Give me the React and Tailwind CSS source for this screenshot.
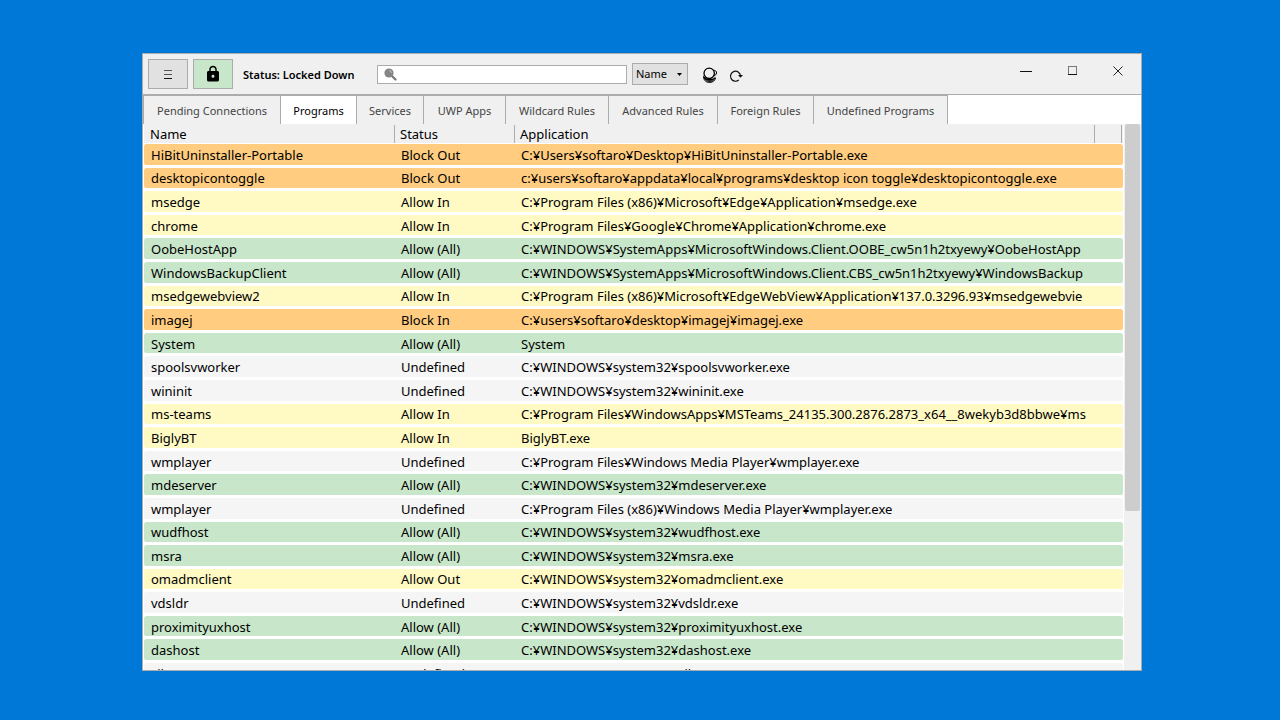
import React from "react";

const tabs = [
  { label: "Pending Connections", width: "w-[138px]" },
  { label: "Programs", width: "w-[76px]", active: true },
  { label: "Services", width: "w-[67px]" },
  { label: "UWP Apps", width: "w-[82px]" },
  { label: "Wildcard Rules", width: "w-[103px]" },
  { label: "Advanced Rules", width: "w-[109px]" },
  { label: "Foreign Rules", width: "w-[96px]" },
  { label: "Undefined Programs", width: "w-[134px]" },
];

const programs = [
  ["HiBitUninstaller-Portable", "Block Out", "C:¥Users¥softaro¥Desktop¥HiBitUninstaller-Portable.exe"],
  ["desktopicontoggle", "Block Out", "c:¥users¥softaro¥appdata¥local¥programs¥desktop icon toggle¥desktopicontoggle.exe"],
  ["msedge", "Allow In", "C:¥Program Files (x86)¥Microsoft¥Edge¥Application¥msedge.exe"],
  ["chrome", "Allow In", "C:¥Program Files¥Google¥Chrome¥Application¥chrome.exe"],
  ["OobeHostApp", "Allow (All)", "C:¥WINDOWS¥SystemApps¥MicrosoftWindows.Client.OOBE_cw5n1h2txyewy¥OobeHostApp"],
  ["WindowsBackupClient", "Allow (All)", "C:¥WINDOWS¥SystemApps¥MicrosoftWindows.Client.CBS_cw5n1h2txyewy¥WindowsBackup"],
  ["msedgewebview2", "Allow In", "C:¥Program Files (x86)¥Microsoft¥EdgeWebView¥Application¥137.0.3296.93¥msedgewebvie"],
  ["imagej", "Block In", "C:¥users¥softaro¥desktop¥imagej¥imagej.exe"],
  ["System", "Allow (All)", "System"],
  ["spoolsvworker", "Undefined", "C:¥WINDOWS¥system32¥spoolsvworker.exe"],
  ["wininit", "Undefined", "C:¥WINDOWS¥system32¥wininit.exe"],
  ["ms-teams", "Allow In", "C:¥Program Files¥WindowsApps¥MSTeams_24135.300.2876.2873_x64__8wekyb3d8bbwe¥ms"],
  ["BiglyBT", "Allow In", "BiglyBT.exe"],
  ["wmplayer", "Undefined", "C:¥Program Files¥Windows Media Player¥wmplayer.exe"],
  ["mdeserver", "Allow (All)", "C:¥WINDOWS¥system32¥mdeserver.exe"],
  ["wmplayer", "Undefined", "C:¥Program Files (x86)¥Windows Media Player¥wmplayer.exe"],
  ["wudfhost", "Allow (All)", "C:¥WINDOWS¥system32¥wudfhost.exe"],
  ["msra", "Allow (All)", "C:¥WINDOWS¥system32¥msra.exe"],
  ["omadmclient", "Allow Out", "C:¥WINDOWS¥system32¥omadmclient.exe"],
  ["vdsldr", "Undefined", "C:¥WINDOWS¥system32¥vdsldr.exe"],
  ["proximityuxhost", "Allow (All)", "C:¥WINDOWS¥system32¥proximityuxhost.exe"],
  ["dashost", "Allow (All)", "C:¥WINDOWS¥system32¥dashost.exe"],
  ["sihost", "Undefined", "C:¥WINDOWS¥system32¥sihost.exe"],
];

const rowColor = {
  "Block Out": "bg-[#ffcc80]",
  "Block In": "bg-[#ffcc80]",
  "Allow In": "bg-[#fff9c4]",
  "Allow Out": "bg-[#fff9c4]",
  "Allow (All)": "bg-[#c8e6c9]",
  Undefined: "bg-[#f5f5f5]",
};

function Toolbar() {
  return (
    <header className="flex h-10 shrink-0 items-center bg-[#f0f0f0] pl-[5px]">
      <button aria-label="Menu" className="flex h-[30px] w-10 items-center justify-center border border-[#acacac] bg-[#e1e1e1]">
        <svg width="10" height="10" viewBox="0 0 10 10" shapeRendering="crispEdges">
          <path d="M1 1.5h8M1 5.5h8" stroke="#555" />
          <path d="M1 9.5h8" stroke="#111" />
        </svg>
      </button>
      <button aria-label="Toggle lock" className="ml-[5px] flex h-[30px] w-10 items-center justify-center border border-[#acacac] bg-[#c8e6c9]">
        <svg width="18" height="18" viewBox="0 0 24 24">
          <path d="M18 8h-1V6c0-2.76-2.24-5-5-5S7 3.240 7 6v2H6c-1.100 0-2 .9-2 2v10c0 1.100.9 2 2 2h12c1.100 0 2-.9 2-2V10c0-1.100-.9-2-2-2zm-6 9c-1.100 0-2-.9-2-2s.9-2 2-2 2 .9 2 2-.9 2-2 2zm3.100-9H8.900V6c0-1.710 1.390-3.100 3.100-3.100s3.100 1.390 3.100 3.100v2z" />
        </svg>
      </button>
      <p className="ml-[10px] w-[134px] whitespace-nowrap pt-0.5 text-[11px] font-semibold">Status: Locked Down</p>
      <label className="flex h-[19px] w-[250px] items-center border border-[#acacac] bg-white pl-1.5">
        <svg width="13" height="13" viewBox="0 0 13 13">
          <path d="M8 8l3.500 3.500" stroke="#777" strokeWidth="2.200" strokeLinecap="round" />
          <circle cx="5" cy="5" r="4.600" fill="#858585" />
          <path d="M5 2.500a2.500 2.500 0 0 1 2.500 2.500" stroke="#bbb" fill="none" />
        </svg>
        <input aria-label="Search" className="min-w-0 flex-1 px-1 text-[11px] outline-none" />
      </label>
      <div className="relative ml-[5px] h-[22px] w-14">
        <select aria-label="Search column" className="block h-full w-full appearance-none border border-[#acacac] bg-[#e1e1e1] pl-[3px] text-[11px]">
          <option>Name</option>
          <option>Status</option>
          <option>Application</option>
        </select>
        <svg className="pointer-events-none absolute right-1.5 top-2.5" width="5" height="3" viewBox="0 0 5 3">
          <path d="M0 0h5L2.500 3z" />
        </svg>
      </div>
      <button aria-label="Clear" className="ml-[14px] pt-0.5">
        <svg width="16" height="17" viewBox="0 0 16 17">
          <path d="M1.300 8a6.200 6.200 0 0 0 12.400 1.500a7 6 0 0 1-12.400-1.500z" />
          <circle cx="7.200" cy="6.300" r="5.200" fill="none" stroke="#000" strokeWidth="1.300" />
          <path d="M11.500 3.500a2.300 2.300 0 0 1 3 2.500c-.2 1.600-1.200 2.400-2.600 2.800" fill="none" stroke="#000" />
          <path d="M1.500 9.500c0 3.500 2.500 6 6 6s5.500-2 6-4.500" fill="none" stroke="#000" />
          <path d="M2.800 12.500c2.500 2 6.500 2 9.500 0" fill="none" stroke="#999" strokeWidth=".5" />
        </svg>
      </button>
      <button aria-label="Refresh" className="ml-[11px] pt-1">
        <svg width="14" height="14" viewBox="0 0 14 14" fill="none" stroke="#111">
          <path d="M9.800 11A5 5 0 1 1 11.500 7" strokeWidth="1.200" />
          <path d="M9 6h5L11.500 8.800z" fill="#111" stroke="none" />
        </svg>
      </button>
      <div className="ml-auto flex h-[34px] self-start">
        <button aria-label="Minimize" className="flex w-[46px] items-center justify-center">
          <svg width="12" height="12" viewBox="0 0 12 12" shapeRendering="crispEdges"><path d="M0 6.500h12" stroke="#111" /></svg>
        </button>
        <button aria-label="Maximize" className="flex w-[46px] items-center justify-center">
          <svg width="10" height="10" viewBox="0 0 10 10" shapeRendering="crispEdges">
            <path d="M1.500 9V.5h8V9" fill="none" stroke="#777" />
            <path d="M1 8.500h9" stroke="#111" />
          </svg>
        </button>
        <button aria-label="Close" className="flex w-[46px] items-center justify-center">
          <svg width="10" height="10" viewBox="0 0 10 10"><path d="M.5.5l9 9M9.500.5l-9 9" stroke="#222" /></svg>
        </button>
      </div>
    </header>
  );
}

function ProgramTable() {
  const head = "border-b border-transparent border-b-white bg-[#f0f0f0] p-0 text-left font-normal leading-[18px]";
  const cell = "overflow-hidden whitespace-nowrap border-b-[3px] border-transparent bg-clip-padding p-0 pt-px leading-[18px]";
  return (
    <table className="h-[563px] w-full table-fixed border-separate border-spacing-0 text-[13px] text-black">
      <colgroup>
        <col className="w-[251px]" />
        <col className="w-[120px]" />
        <col />
        <col className="w-[28px]" />
      </colgroup>
      <thead>
        <tr className="h-5">
          <th className={head}><div className="border-r border-[#acacac] pl-1.5">Name</div></th>
          <th className={head}><div className="border-r border-[#acacac] pl-[5px]">Status</div></th>
          <th className={head}><div className="border-r border-[#acacac] pl-[5px]">Application</div></th>
          <th className={head}><div className="mr-px h-[18px] border-r border-[#acacac]" /></th>
        </tr>
      </thead>
      <tbody>
        {programs.map(([name, status, path], i) => {
          const c = `${cell} ${rowColor[status]}`;
          return (
            <tr key={i}>
              <td className={`${c} rounded-tl-[2px] rounded-bl-[2px_5px]`}><div className="pl-[7px]">{name}</div></td>
              <td className={c}><div className="pl-1.5">{status}</div></td>
              <td className={c}><div className="mx-1.5 overflow-hidden">{path}</div></td>
              <td className={`${c} rounded-tr-[2px] rounded-br-[2px_5px]`} />
            </tr>
          );
        })}
      </tbody>
    </table>
  );
}

export default function App() {
  return (
    <div className="flex h-screen bg-[#0078d7] pb-[49px] pl-[142px] pr-[138px] pt-[53px] font-['Noto_Sans','Open_Sans',sans-serif] text-black">
      <main className="flex min-w-0 flex-1 flex-col overflow-hidden border border-[#acacac] bg-white">
        <Toolbar />
        <nav role="tablist" className="flex h-[30px] shrink-0 border-t border-[#acacac] text-[11px]">
          {tabs.map((tab) => (
            <button
              key={tab.label}
              role="tab"
              aria-selected={!!tab.active}
              className={`${tab.width} shrink-0 whitespace-nowrap border-r border-t border-[#acacac] pt-0.5 first:border-l ${tab.active ? "bg-white text-black" : "bg-[#f0f0f0] text-[#444]"}`}
            >
              {tab.label}
            </button>
          ))}
        </nav>
        <div className="flex min-h-0 flex-1 pl-px">
          <div className="min-w-0 flex-1 overflow-hidden">
            <ProgramTable />
          </div>
          <div className="ml-px w-[17px] bg-[#f0f0f0] px-px">
            <div className="h-[387px] rounded-xs bg-[#cdcdcd]" />
          </div>
        </div>
      </main>
    </div>
  );
}
